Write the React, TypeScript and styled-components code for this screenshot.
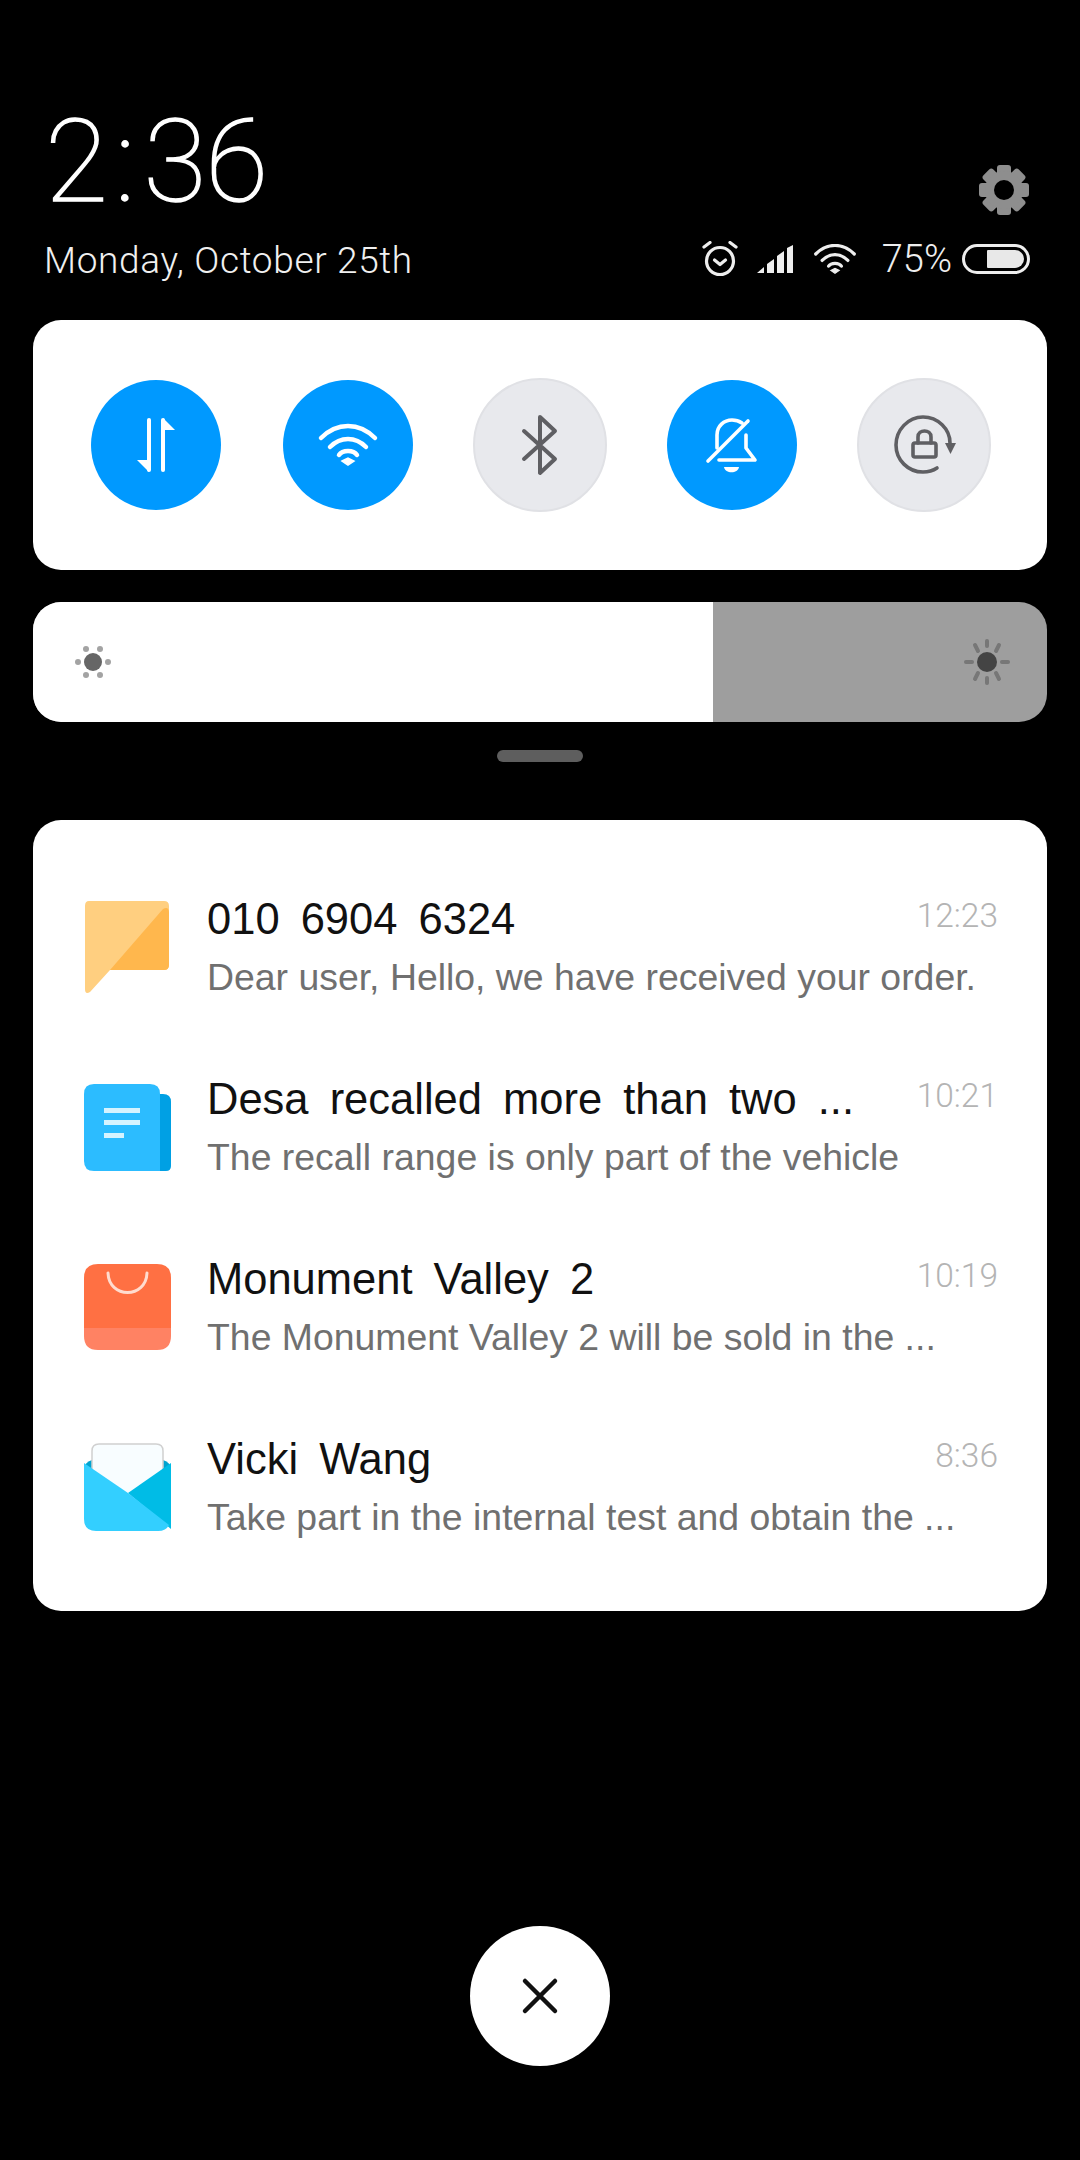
import React from "react";
import styled, { createGlobalStyle } from "styled-components";

const GlobalStyle = createGlobalStyle`
  html, body {
    margin: 0;
    padding: 0;
    background: #000;
  }
  body {
    font-family: "Roboto", "Liberation Sans", sans-serif;
  }
`;

const Screen = styled.div`
  width: 1080px;
  height: 2160px;
  background: #000;
  display: flex;
  flex-direction: column;
  align-items: center;
  overflow: hidden;
`;

const Header = styled.div`
  width: 1014px;
  height: 320px;
  box-sizing: border-box;
  padding: 86px 17px 0 11px;
  display: flex;
  justify-content: space-between;
  align-items: flex-start;
`;

const ClockColumn = styled.div`
  display: flex;
  flex-direction: column;
`;

const Clock = styled.div`
  font-size: 115px;
  font-weight: 100;
  line-height: 146px;
  color: #fff;
  letter-spacing: -1px;
  -webkit-text-stroke: 1.4px #fff;
  margin-top: 3px;
  margin-left: 1px;
`;

const ClockColon = styled.span`
  margin: 0 9px 0 8px;
`;

const DateText = styled.div`
  font-size: 37px;
  font-weight: 300;
  line-height: 42px;
  letter-spacing: 0.65px;
  color: #f0f0f0;
  margin-top: 5px;
`;

const StatusColumn = styled.div`
  display: flex;
  flex-direction: column;
  align-items: flex-end;
  padding-top: 78px;
`;

const GearIcon = styled.svg`
  width: 52px;
  height: 52px;
`;

const StatusRow = styled.div`
  display: flex;
  align-items: center;
  margin-top: 25px;
  height: 36px;
`;

const StatusIcon = styled.svg<{ $gap: number }>`
  margin-right: ${(p) => p.$gap}px;
  display: block;
`;

const Percent = styled.div`
  font-size: 38px;
  font-weight: 300;
  color: #eee;
  margin-right: 10px;
`;

const Battery = styled.div`
  width: 68px;
  height: 30px;
  box-sizing: border-box;
  border: 3px solid #eee;
  border-radius: 15px;
  padding: 3px;
  display: flex;
  justify-content: flex-end;
`;

const BatteryFill = styled.div`
  width: 37px;
  background: #e8e8e8;
  border-radius: 1px 9px 9px 1px;
`;

const QuickCard = styled.div`
  width: 1014px;
  height: 250px;
  background: #fff;
  border-radius: 28px;
  box-sizing: border-box;
  padding: 0 56px;
  display: flex;
  justify-content: space-between;
  align-items: center;
`;

const QuickCell = styled.div`
  width: 134px;
  height: 134px;
  display: flex;
  align-items: center;
  justify-content: center;
`;

const Toggle = styled.div<{ $on?: boolean }>`
  width: ${(p) => (p.$on ? "130px" : "134px")};
  height: ${(p) => (p.$on ? "130px" : "134px")};
  box-sizing: border-box;
  border-radius: 50%;
  background: ${(p) => (p.$on ? "#0099ff" : "#e8e9ed")};
  border: ${(p) => (p.$on ? "none" : "2px solid #e0e1e5")};
  display: flex;
  align-items: center;
  justify-content: center;
`;

const ToggleGlyph = styled.svg`
  width: 80px;
  height: 80px;
  display: block;
`;

const Brightness = styled.div`
  width: 1014px;
  height: 120px;
  margin-top: 32px;
  border-radius: 28px;
  overflow: hidden;
  background: #9e9e9e;
  display: flex;
`;

const BrightnessFill = styled.div`
  width: 680px;
  background: #fff;
  display: flex;
  align-items: center;
  padding-left: 40px;
  box-sizing: border-box;
`;

const BrightnessRest = styled.div`
  flex: 1;
  display: flex;
  align-items: center;
  justify-content: flex-end;
  padding-right: 36px;
`;

const Handle = styled.div`
  width: 86px;
  height: 12px;
  border-radius: 6px;
  background: #5e5e5e;
  margin: 28px 0 58px;
`;

const NotificationCard = styled.div`
  width: 1014px;
  height: 791px;
  background: #fff;
  border-radius: 28px;
  box-sizing: border-box;
  padding: 37px 49px 34px 51px;
  display: flex;
  flex-direction: column;
`;

const Row = styled.div`
  height: 180px;
  display: flex;
  align-items: center;
  gap: 36px;
`;

const AppIcon = styled.svg`
  width: 87px;
  height: 93px;
  flex: none;
  display: block;
`;

const RowBody = styled.div`
  flex: 1;
  min-width: 0;
  display: flex;
  flex-direction: column;
  padding-top: 3px;
`;

const TitleLine = styled.div`
  display: flex;
  justify-content: space-between;
  height: 56px;
`;

const Title = styled.div`
  font-family: "Liberation Sans", sans-serif;
  font-size: 43.5px;
  line-height: 53px;
  color: #111;
  word-spacing: 9px;
  white-space: nowrap;
`;

const Time = styled.div`
  font-size: 33.5px;
  font-weight: 300;
  line-height: 46px;
  color: #b4b4b4;
`;

const Summary = styled.div`
  font-family: "Liberation Sans", sans-serif;
  font-size: 37.4px;
  line-height: 56px;
  color: #707070;
  white-space: nowrap;
`;

const Footer = styled.div`
  flex: 1;
  display: flex;
  align-items: flex-end;
  padding-bottom: 94px;
`;

const CloseButton = styled.div`
  width: 140px;
  height: 140px;
  border-radius: 50%;
  background: #fff;
  display: flex;
  align-items: center;
  justify-content: center;
`;

const WifiArcs = ({ color }: { color: string }) => (
  <g fill="none" stroke={color} strokeWidth="4.5" strokeLinecap="round">
    <path d="M13 33 C21 25 31 21 40 21 C49 21 59 25 67 33" />
    <path d="M22 42 C27 37 33 34 40 34 C47 34 53 37 58 42" />
    <path d="M31 50 C33 47 36 46 40 46 C44 46 47 47 49 50" />
    <path d="M34 56 L40 53 L46 56 L40 60 Z" fill={color} strokeWidth="1.5" stroke={color} />
  </g>
);

const Gear = () => (
  <GearIcon viewBox="0 0 52 52">
    <g fill="#8e8e8e">
      {[0, 45, 90, 135, 180, 225, 270, 315].map((a) => (
        <rect key={a} x="19" y="1" width="14" height="12" rx="3" transform={`rotate(${a} 26 26)`} />
      ))}
      <circle cx="26" cy="26" r="19" />
    </g>
    <circle cx="26" cy="26" r="10" fill="#000" />
  </GearIcon>
);

const SunSmall = () => (
  <svg width="40" height="40" viewBox="0 0 40 40">
    <circle cx="20" cy="20" r="9" fill="#666" />
    <g fill="#a3a3a3">
      <circle cx="13" cy="7" r="3" />
      <circle cx="27" cy="7" r="3" />
      <circle cx="13" cy="33" r="3" />
      <circle cx="27" cy="33" r="3" />
      <circle cx="5" cy="20" r="3" />
      <circle cx="35" cy="20" r="3" />
    </g>
  </svg>
);

const SunLarge = () => (
  <svg width="48" height="48" viewBox="0 0 48 48">
    <circle cx="24" cy="24" r="10" fill="#444" />
    <g stroke="#777" strokeWidth="4" strokeLinecap="round">
      <path d="M24 3 V8" />
      <path d="M24 40 V45" />
      <path d="M3 24 H9" />
      <path d="M39 24 H45" />
      <path d="M12 7 L15 13" />
      <path d="M36 7 L33 13" />
      <path d="M12 41 L15 35" />
      <path d="M36 41 L33 35" />
    </g>
  </svg>
);

const notifications = [
  { id: "msg", title: "010 6904 6324", time: "12:23", text: "Dear user, Hello, we have received your order." },
  { id: "doc", title: "Desa recalled more than two ...", time: "10:21", text: "The recall range is only part of the vehicle" },
  { id: "bag", title: "Monument Valley 2", time: "10:19", text: "The Monument Valley 2 will be sold in the ..." },
  { id: "mail", title: "Vicki Wang", time: "8:36", text: "Take part in the internal test and obtain the ..." },
];

const NotificationGlyph = ({ id }: { id: string }) => {
  if (id === "msg") {
    return (
      <AppIcon viewBox="0 0 87 93">
        <path d="M5 0 H80 Q85 0 85 5 V64 Q85 69 80 69 H26 L6 91 Q1 94 1 88 V5 Q1 0 5 0 Z" fill="#ffcf80" />
        <path d="M26 69 L79 8 Q85 5 85 12 V64 Q85 69 80 69 Z" fill="#ffb74d" />
      </AppIcon>
    );
  }
  if (id === "doc") {
    return (
      <AppIcon viewBox="0 0 87 93">
        <path d="M60 13 H79 Q87 13 87 21 V85 Q87 90 82 90 H60 Z" fill="#00a0e4" />
        <path d="M10 3 H66 Q76 3 76 13 V90 H10 Q0 90 0 80 V13 Q0 3 10 3 Z" fill="#2cbcff" />
        <g fill="#d5f3ff">
          <rect x="20" y="27" width="36" height="5" />
          <rect x="20" y="39" width="36" height="5" />
          <rect x="20" y="52" width="20" height="5" />
        </g>
      </AppIcon>
    );
  }
  if (id === "bag") {
    return (
      <AppIcon viewBox="0 0 87 93">
        <path d="M14 3 H73 Q87 3 87 17 V67 H0 V17 Q0 3 14 3 Z" fill="#ff7043" />
        <path d="M0 67 H87 V75 Q87 89 73 89 H14 Q0 89 0 75 Z" fill="#ff8263" />
        <path d="M24 12 C25 38 62 38 63 12" fill="none" stroke="#ffdccf" strokeWidth="3" strokeLinecap="round" />
      </AppIcon>
    );
  }
  return (
    <AppIcon viewBox="0 0 87 93">
      <path d="M8 19 Q0 21 0 30 V40 H87 V30 Q87 21 79 19 Z" fill="#00a3cf" />
      <path d="M8 30 V10 Q8 3 15 3 H72 Q79 3 79 10 V30 L44 60 Z" fill="#f8fdff" stroke="#d0d0d0" strokeWidth="1.5" />
      <path d="M44 52 L87 22 V88 Z" fill="#00bce6" />
      <path d="M0 22 L44 52 L85 84 Q82 90 74 90 H12 Q0 90 0 78 Z" fill="#33cfff" />
    </AppIcon>
  );
};

export default function App() {
  return (
    <Screen>
      <GlobalStyle />
      <Header>
        <ClockColumn>
          <Clock>
            2<ClockColon>:</ClockColon>36
          </Clock>
          <DateText>Monday, October 25th</DateText>
        </ClockColumn>
        <StatusColumn>
          <Gear />
          <StatusRow>
            <StatusIcon $gap={19} width="36" height="36" viewBox="0 0 36 36">
              <g fill="none" stroke="#eee" strokeWidth="3.2" strokeLinecap="round" strokeLinejoin="round">
                <circle cx="18" cy="20" r="13.5" />
                <path d="M12.5 19 L18 23.5 L23.5 19" />
                <path d="M2 6 L8 1.5" />
                <path d="M34 6 L28 1.5" />
              </g>
            </StatusIcon>
            <StatusIcon $gap={21} width="36" height="28" viewBox="0 0 36 28">
              <g fill="#eee">
                <polygon points="0,28 7,22 7,28" />
                <polygon points="10,28 10,19 17,14 17,28" />
                <polygon points="20,28 20,11 27,6 27,28" />
                <polygon points="30,28 30,3 36,0 36,28" />
              </g>
            </StatusIcon>
            <StatusIcon $gap={26} width="42" height="30" viewBox="12 19 56 42">
              <WifiArcs color="#eee" />
            </StatusIcon>
            <Percent>75%</Percent>
            <Battery>
              <BatteryFill />
            </Battery>
          </StatusRow>
        </StatusColumn>
      </Header>

      <QuickCard>
        <QuickCell>
          <Toggle $on>
            <ToggleGlyph viewBox="0 0 80 80">
              <g fill="#fff">
                <rect x="31" y="13" width="4" height="54" rx="2" />
                <rect x="45" y="13" width="4" height="54" rx="2" />
                <polygon points="33,67 21,55 33,55" />
                <polygon points="47,13 59,25 47,25" />
              </g>
            </ToggleGlyph>
          </Toggle>
        </QuickCell>
        <QuickCell>
          <Toggle $on>
            <ToggleGlyph viewBox="0 0 80 80">
              <WifiArcs color="#fff" />
            </ToggleGlyph>
          </Toggle>
        </QuickCell>
        <QuickCell>
          <Toggle>
            <ToggleGlyph viewBox="0 0 80 80">
              <path
                d="M24 26 L55 54 L40 68 V12 L55 26 L24 54"
                fill="none"
                stroke="#5f5f63"
                strokeWidth="4"
                strokeLinecap="round"
                strokeLinejoin="round"
              />
            </ToggleGlyph>
          </Toggle>
        </QuickCell>
        <QuickCell>
          <Toggle $on>
            <ToggleGlyph viewBox="0 0 80 80">
              <g fill="none" stroke="#fff" strokeWidth="3.6" strokeLinecap="round" strokeLinejoin="round">
                <path d="M25 43 V30 C25 21 32 15 40 15 C44 15 47 16 50 18" />
                <path d="M54 30 V43 L63 55 H27" />
                <path d="M56 16 L16 56" />
              </g>
              <path d="M32 62 H47 C46 69 33 69 32 62 Z" fill="#fff" />
            </ToggleGlyph>
          </Toggle>
        </QuickCell>
        <QuickCell>
          <Toggle>
            <ToggleGlyph viewBox="0 0 80 80">
              <g fill="none" stroke="#5f5f63" strokeWidth="3.6" strokeLinecap="round" strokeLinejoin="round">
                <path d="M53 63 C47 67 43 67 39 67 C24 67 12 55 12 40 C12 25 24 12 39 12 C54 12 66 24 66 38" />
                <rect x="29" y="38" width="23" height="14" rx="2" />
                <path d="M34 38 V32 C34 24 47 24 47 32 V38" />
              </g>
              <polygon points="61,38 72,38 66.5,49" fill="#5f5f63" />
            </ToggleGlyph>
          </Toggle>
        </QuickCell>
      </QuickCard>

      <Brightness>
        <BrightnessFill>
          <SunSmall />
        </BrightnessFill>
        <BrightnessRest>
          <SunLarge />
        </BrightnessRest>
      </Brightness>

      <Handle />

      <NotificationCard>
        {notifications.map((n) => (
          <Row key={n.id}>
            <NotificationGlyph id={n.id} />
            <RowBody>
              <TitleLine>
                <Title>{n.title}</Title>
                <Time>{n.time}</Time>
              </TitleLine>
              <Summary>{n.text}</Summary>
            </RowBody>
          </Row>
        ))}
      </NotificationCard>

      <Footer>
        <CloseButton>
          <svg width="40" height="40" viewBox="0 0 40 40">
            <path d="M5 5 L35 35 M35 5 L5 35" stroke="#111" strokeWidth="4.5" strokeLinecap="round" />
          </svg>
        </CloseButton>
      </Footer>
    </Screen>
  );
}
